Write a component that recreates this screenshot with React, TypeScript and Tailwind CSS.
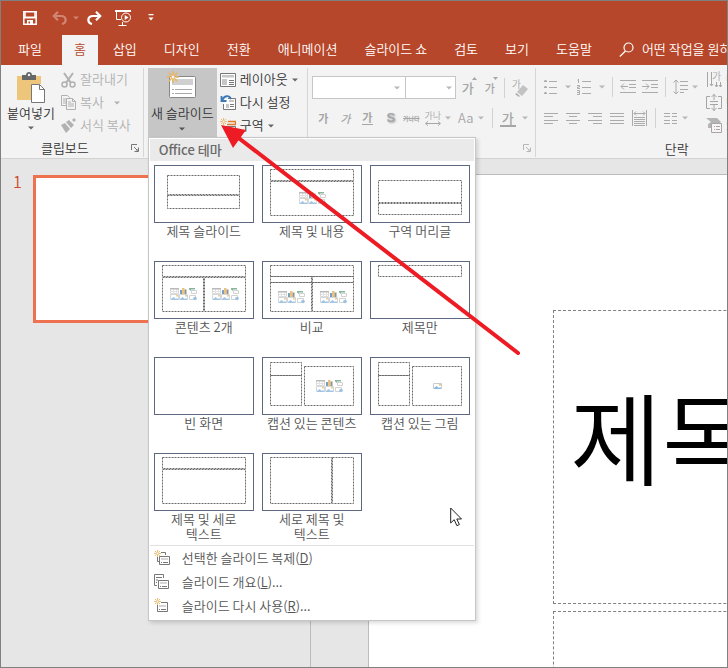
import React from 'react';

type Rect = [number, number, number, number];

interface Layout {
  name: string;
  boxes: Rect[];
  icons?: [number, number][];
  picture?: boolean;
}

const TABS = ['파일', '홈', '삽입', '디자인', '전환', '애니메이션', '슬라이드 쇼', '검토', '보기', '도움말'];

// boxes are x, y, width, height on a 100x58 slide
const LAYOUTS: Layout[] = [
  { name: '제목 슬라이드', boxes: [[13, 10, 72, 19], [13, 30, 72, 13]] },
  { name: '제목 및 내용', boxes: [[8, 4, 83, 11], [8, 16, 83, 34]], icons: [[37, 27]] },
  { name: '구역 머리글', boxes: [[8, 15, 83, 22], [8, 38, 83, 11]] },
  { name: '콘텐츠 2개', boxes: [[8, 4, 83, 11], [8, 16, 41, 34], [50, 16, 41, 34]], icons: [[16, 27], [58, 27]] },
  {
    name: '비교',
    boxes: [[8, 4, 83, 11], [8, 15, 41, 6], [50, 15, 41, 6], [8, 21, 41, 29], [50, 21, 41, 29]],
    icons: [[16, 30], [58, 30]],
  },
  { name: '제목만', boxes: [[8, 4, 83, 11]] },
  { name: '빈 화면', boxes: [] },
  { name: '캡션 있는 콘텐츠', boxes: [[8, 5, 31, 13], [8, 18, 31, 30], [42, 9, 49, 39]], icons: [[54, 23]] },
  { name: '캡션 있는 그림', boxes: [[8, 5, 31, 13], [8, 18, 31, 30], [42, 9, 49, 39]], picture: true },
  { name: '제목 및 세로 텍스트', boxes: [[8, 4, 83, 11], [8, 16, 83, 34]] },
  { name: '세로 제목 및 텍스트', boxes: [[8, 4, 61, 46], [70, 4, 21, 46]] },
];

const Caret = ({ className = 'text-[#666]' }: { className?: string }) => (
  <svg width="6" height="4" viewBox="0 0 6 4" className={`shrink-0 ${className}`} aria-hidden="true">
    <path d="M0 .5h6L3 3.5z" fill="currentColor" />
  </svg>
);

const Divider = () => <span className="h-5 w-px shrink-0 bg-[#d2d2d2]" />;

const Launcher = ({ label, className }: { label: string; className: string }) => (
  <button aria-label={label} className={className}>
    <svg width="8" height="8" viewBox="0 0 8 8" fill="none" stroke="currentColor">
      <path d="M.5 6V.5H6M3 3l3 3M7.500 3.500v4h-4M7 5v2H5" />
    </svg>
  </button>
);

const Burst = () => (
  <g stroke="#eab45e" strokeWidth="1.600" fill="none">
    <path d="M6 0v3.500M6 8.500V12M0 6h3.500M8.500 6H12M1.800 1.800l2.500 2.500M7.700 7.700l2.500 2.500M10.200 1.800L7.700 4.300M4.300 7.700l-2.500 2.500" />
    <circle cx="6" cy="6" r="2" fill="#f2f2f2" strokeWidth="1" />
  </g>
);

const SmallPicture = ({ x, y }: { x: number; y: number }) => (
  <g transform={`translate(${x} ${y})`}>
    <path d="M.5.5h8v5h-8z" fill="#fff" stroke="#c9cdd2" />
    <path d="M1 5l2.500-2L6 5l1-1 1.500 1.500V6H1z" fill="#8db9de" />
    <path d="M6 1h2v1.500H6z" fill="#f0c274" />
  </g>
);

const ContentIcons = ({ x, y }: { x: number; y: number }) => (
  <g transform={`translate(${x} ${y})`} opacity=".8">
    <path d="M.5.5h8v5h-8z" fill="#fff" stroke="#cfcfcf" />
    <path d="M1 3.500h7M3.500 1v5M6.500 1v5" stroke="#dcdcdc" />
    <path d="M0 0h9v1.500H0z" fill="#aaa" />
    <path d="M10 2h2v4h-2z" fill="#5d87b0" />
    <path d="M12 0h2.500v6H12z" fill="#e9b65c" />
    <path d="M14.500 1.500h2V6h-2z" fill="#777" />
    <path d="M19 0h6v1.500h-4V3l-2-1.500z" fill="#6aa585" />
    <path d="M21.500 2.500h5v3h-5z" fill="#fff" stroke="#c8c8c8" />
    <SmallPicture x={0} y={6} />
    <SmallPicture x={9} y={6} />
    <path d="M19.500 7.500h6v4h-6z" fill="#fff" stroke="#c8c8c8" />
    <circle cx="25" cy="10.500" r="1.800" fill="#86b4df" />
  </g>
);

const LayoutPreview = ({ layout }: { layout: Layout }) => (
  <svg viewBox="1 1 98 56" className="block w-full" aria-hidden="true">
    {layout.boxes.map(([x, y, w, h], i) => (
      <rect key={i} x={x + 0.5} y={y + 0.5} width={w} height={h} fill="none" stroke="#6a6a6a" strokeDasharray="2 1" />
    ))}
    {layout.icons?.map(([x, y]) => <ContentIcons key={x} x={x} y={y} />)}
    {layout.picture && <SmallPicture x={63} y={26} />}
  </svg>
);

const NewSlideMenu = () => (
  <div className="absolute left-0 top-full z-10 w-[328px] border border-[#c6c6c6] bg-white p-px pb-0.5 text-[#555] shadow-[2px_2px_4px_rgba(0,0,0,0.15)]">
    <h2 className="bg-[#eaeaea] px-[9px] leading-[22px] font-medium text-[#6a6a6a]">Office 테마</h2>
    <div className="grid grid-cols-3 gap-2 p-1">
      {LAYOUTS.map((layout) => (
        <button key={layout.name} className="flex flex-col items-center">
          <span className="w-full border border-[#5d6880]">
            <LayoutPreview layout={layout} />
          </span>
          <span className="min-h-[30px] px-3 leading-[15px] break-keep">
            {layout.name.length > 9 ? layout.name : <span className="whitespace-nowrap">{layout.name}</span>}
          </span>
        </button>
      ))}
    </div>
    <div className="border-t border-[#e1e1e1]">
      <button className="flex h-6 w-full items-center gap-3 px-1">
        <svg width="16" height="16" viewBox="0 0 16 16" fill="none" stroke="#777">
          <path d="M7 2.500h4.500V5M3.500 7v4.500H5" />
          <path d="M5.500 6.500h10v8h-10z" fill="#fff" />
          <path d="M7 8h7v2H7z" fill="#d5d5d5" stroke="none" />
          <path d="M7 12.500h1M9 12.500h5" />
          <g transform="scale(.58)"><Burst /></g>
        </svg>
        <span>선택한 슬라이드 복제(<u>D</u>)</span>
      </button>
      <button className="flex h-6 w-full items-center gap-3 px-1">
        <svg width="16" height="16" viewBox="0 0 16 16" fill="none" stroke="#777">
          <path d="M3 11.500H.5V.5h9V4M2 3.500h6M2 6h2M2 8.500h1" />
          <path d="M4.500 6.500h10v8h-10z" fill="#fff" />
          <path d="M6 8h7v2H6z" fill="#d5d5d5" stroke="none" />
          <path d="M6 12.500h1M8 12.500h5" />
        </svg>
        <span>슬라이드 개요(<u>L</u>)...</span>
      </button>
      <button className="flex h-6 w-full items-center gap-3 px-1">
        <svg width="16" height="16" viewBox="0 0 16 16" fill="none" stroke="#777">
          <path d="M7 4.500h6.500v9h-10V7" />
          <path d="M5 7h7v2H5z" fill="#d5d5d5" stroke="none" />
          <path d="M5 11.500h1M7 11.500h5" />
          <g transform="scale(.58)"><Burst /></g>
        </svg>
        <span>슬라이드 다시 사용(<u>R</u>)...</span>
      </button>
    </div>
  </div>
);

const TitleBar = () => (
  <header className="bg-[#b7472a] text-white">
    <div className="flex h-[34px] items-center pl-[22px]">
      <button aria-label="저장">
        <svg width="14" height="14" viewBox="0 0 14 14" fill="none" stroke="#fff" strokeWidth="1.500">
          <path d="M.8.8h12.400v12.400H.8z" />
          <path d="M1 6.500h12" strokeWidth="2" />
          <path d="M2 1v5M12 1v5" />
          <path d="M4 9h6v4H7V10.500H5.500V13H4z" fill="#fff" stroke="none" />
        </svg>
      </button>
      <button aria-label="실행 취소" className="ml-[15px] flex items-center gap-1.5 text-[#d08673]">
        <svg width="15" height="14" viewBox="0 0 15 14" fill="none" stroke="currentColor" strokeWidth="2.200">
          <path d="M2 5h7c6 0 6 7 1 8" />
          <path d="M6 .8L1.800 5 6 9.200" />
        </svg>
        <Caret className="text-[#d08673]" />
      </button>
      <button aria-label="다시 실행" className="ml-2">
        <svg width="15" height="14" viewBox="0 0 15 14" fill="none" stroke="#fff" strokeWidth="2.200">
          <path d="M13 5H6C0 5 0 12 5 13" />
          <path d="M9 .8L13.200 5 9 9.200" />
        </svg>
      </button>
      <button aria-label="처음부터 시작" className="ml-[13px]">
        <svg width="17" height="16" viewBox="0 0 17 16" fill="none" stroke="#fff">
          <path d="M0 1h16" strokeWidth="2" />
          <path d="M1.500 2v7.500H6M7.500 12v3M3.500 15.500h8" />
          <circle cx="11" cy="7.500" r="4.500" />
          <path d="M9.700 5v5L13.500 7.500z" fill="#fff" stroke="none" />
        </svg>
      </button>
      <button aria-label="빠른 실행 도구 모음 사용자 지정" className="ml-4">
        <svg width="6" height="8" viewBox="0 0 6 8" fill="#fff">
          <path d="M.5 0h5v1.200h-5zM.5 3.500h5L3 6.500z" />
        </svg>
      </button>
    </div>
    <nav className="flex gap-[3px] whitespace-nowrap pl-[5px] leading-7">
      {TABS.map((tab) => (
        <button key={tab} className={tab === '홈' ? 'ml-[5px] bg-[#f3f3f3] px-3 pb-0.5 text-[#b7472a]' : 'px-3 pb-0.5'}>
          {tab}
        </button>
      ))}
      <button className="flex items-center gap-2 pb-0.5 pl-3">
        <svg width="15" height="15" viewBox="0 0 15 15" fill="none" stroke="#fff" strokeWidth="1.200">
          <circle cx="9.500" cy="5.500" r="4.500" />
          <path d="M6.500 9L.8 14.500" />
        </svg>
        어떤 작업을 원하
      </button>
    </nav>
  </header>
);

const ClipboardGroup = () => (
  <section className="flex shrink-0 flex-col border-r border-[#d6d6d6] pl-1.5">
    <div className="flex h-[69px]">
      <button className="flex w-12 flex-col items-center whitespace-nowrap text-[#333]">
        <svg width="30" height="32" viewBox="0 0 30 32" className="mt-1">
          <path d="M1 4h24v8h-9v16H1z" fill="#edc57b" />
          <path d="M6 3h4c0-4 6-4 6 0h4v5H6z" fill="#666" />
          <circle cx="13" cy="3" r="1.200" fill="#f3f3f3" />
          <path d="M15.500 12.500h8l5 5v13h-13z" fill="#fff" stroke="#777" />
          <path d="M23.500 12.500v5h5" fill="none" stroke="#777" />
        </svg>
        <span className="leading-[18px]">붙여넣기</span>
        <Caret className="mt-1 text-[#666]" />
      </button>
      <div className="ml-1.5 flex flex-col pr-3 text-[#b1b1b1]">
        <button className="flex h-[23px] items-center gap-1">
          <svg width="15" height="16" viewBox="0 0 15 16" fill="none" stroke="currentColor" strokeWidth="1.500">
            <path d="M3 1l7 10M12 1L5 11" strokeWidth="2" />
            <circle cx="3.500" cy="12.500" r="2.500" />
            <circle cx="11.500" cy="12.500" r="2.500" />
          </svg>
          <span className="pb-0.5">잘라내기</span>
        </button>
        <button className="flex h-[23px] items-center gap-1">
          <svg width="15" height="15" viewBox="0 0 15 15" fill="#f3f3f3" stroke="currentColor">
            <path d="M.5.5h6l2 2v8h-8zM2 4h3M2 6h3M2 8h3" />
            <path d="M5.500 3.500h6l3 3v8h-9zM11.500 3.500v3h3M7 7h3M7 9h6M7 11h6" />
          </svg>
          <span className="pb-0.5">복사</span>
          <Caret className="ml-1.5 text-[#b1b1b1]" />
        </button>
        <button className="flex h-[23px] items-center gap-1">
          <svg width="15" height="15" viewBox="0 0 15 15" fill="currentColor">
            <path d="M0 7l4-2 5 6-4 4zM5 4l3-2 5 5-3 3zM11 2l2-2 2 2-2 2z" />
          </svg>
          <span className="pb-0.5">서식 복사</span>
        </button>
      </div>
    </div>
    <div className="flex h-5 items-center pt-0.5 pr-1 text-[#333]">
      <span className="grow pr-2 text-center">클립보드</span>
      <Launcher label="클립보드 옵션" className="text-[#777]" />
    </div>
  </section>
);

const SlidesGroup = () => (
  <section className="flex w-[164px] shrink-0 border-r border-[#d6d6d6] pl-1 text-[#333]">
    <div className="relative h-[69px]">
      <button className="flex h-full w-[69px] flex-col items-center whitespace-nowrap bg-[#c6c6c6]" aria-expanded="true">
        <svg width="30" height="28" viewBox="0 0 30 28" className="mt-[3px]">
          <rect x="2.500" y="5.500" width="26" height="21" rx="1" fill="#fff" stroke="#888" />
          <path d="M5 8h21v6H5z" fill="#d0d0d0" />
          <path d="M5 18.500h2M8 18.500h17M5 22.500h2M8 22.500h17" stroke="#aaa" />
          <Burst />
        </svg>
        <span className="mt-1 leading-[20px]">새 슬라이드</span>
        <Caret className="mt-1 text-[#555]" />
      </button>
      <NewSlideMenu />
    </div>
    <div className="flex flex-col whitespace-nowrap pl-[3px]">
      <button className="flex h-[23px] items-center gap-1">
        <svg width="16" height="14" viewBox="0 0 16 14" fill="#fff" stroke="#777">
          <path d="M.5.5h15v13H.5z" />
          <path d="M2 2h12v2.500H2zM2 6h5v6H2z" fill="#c6c6c6" stroke="none" />
          <path d="M9 7.500h5M9 9.500h5M9 11.500h5" />
        </svg>
        <span className="pb-0.5">레이아웃</span>
        <Caret />
      </button>
      <button className="flex h-[23px] items-center gap-1">
        <svg width="16" height="15" viewBox="0 0 16 15" fill="none" stroke="#777">
          <path d="M8 3.500h7.500v11h-12V9" fill="#fff" />
          <path d="M9 5h5v2H9zM6 9h3v4H6z" fill="#c6c6c6" stroke="none" />
          <path d="M10 9.500h4M10 11.500h4" />
          <path d="M1.500 1v5h5M2 6c2-6 7-6 9-2" stroke="#3b78b5" strokeWidth="1.800" />
        </svg>
        <span className="pb-0.5">다시 설정</span>
      </button>
      <button className="flex h-[23px] items-center gap-1">
        <svg width="16" height="15" viewBox="0 0 16 15" fill="none">
          <path d="M8 3.500h7.500v3H7" stroke="#e07b2c" strokeWidth="1.500" />
          <path d="M6.500 8.500h9v5h-9z" fill="#fff" stroke="#777" />
          <g transform="scale(.6)"><Burst /></g>
        </svg>
        <span className="pb-0.5">구역</span>
        <Caret />
      </button>
    </div>
  </section>
);

const FontGroup = () => (
  <section className="flex w-[228px] shrink-0 flex-col border-r border-[#d6d6d6] pl-1 text-[#a6a6a6]">
    <div className="mt-2 flex h-[23px] items-center">
      <div className="relative h-full">
        <select aria-label="글꼴" disabled className="h-full w-[94px] appearance-none border border-[#c6c6c6] bg-white" />
        <Caret className="absolute top-2.5 right-1.5 text-[#b8b8b8]" />
      </div>
      <div className="relative h-full">
        <select aria-label="글꼴 크기" disabled className="h-full w-[50px] appearance-none border border-l-0 border-[#c6c6c6] bg-white" />
        <Caret className="absolute top-2.5 right-1 text-[#b8b8b8]" />
      </div>
      <button className="relative ml-1.5 w-[15px] text-left font-medium leading-[22px]">
        가
        <svg width="5" height="3" viewBox="0 0 5 3" className="absolute top-0 right-0" fill="currentColor"><path d="M0 3h5L2.500 0z" /></svg>
      </button>
      <button className="relative ml-2 w-[13px] text-left text-[11px] font-medium leading-[22px]">
        가
        <svg width="5" height="3" viewBox="0 0 5 3" className="absolute top-0 right-0" fill="currentColor"><path d="M0 0h5L2.500 3z" /></svg>
      </button>
      <span className="ml-1.5 mr-[7px] flex"><Divider /></span>
      <button className="relative flex h-[18px] w-4 text-[10px] leading-[10px]">
        가
        <svg width="13" height="12" viewBox="0 0 13 12" className="absolute right-0 bottom-0">
          <path d="M8 0l5 4-6 7-5-4z" fill="#c2c2c2" />
          <path d="M1.500 8l4 3.500H3L0 9z" fill="#b0b0b0" />
        </svg>
      </button>
    </div>
    <div className="mt-2 flex h-[22px] items-center text-[11px]">
      <button className="ml-1.5 w-[11px] font-bold">가</button>
      <button className="ml-[11px] w-[11px] font-medium italic">가</button>
      <button className="ml-[11px] w-[11px] border-b border-current font-bold leading-[13px]">가</button>
      <button className="ml-3 w-3 font-['Liberation_Sans',sans-serif] text-[13px] font-bold [text-shadow:1px_1px_2px_#aaa]">S</button>
      <button className="ml-1.5 w-[17px] whitespace-nowrap text-[6px] font-bold line-through">가나다</button>
      <button className="ml-[5px] flex items-center gap-1">
        <span className="flex w-4 flex-col items-center whitespace-nowrap text-[9px] leading-[10px]">
          가나
          <svg width="16" height="5" viewBox="0 0 16 5" fill="none" stroke="currentColor"><path d="M.5 2.500h15M3 .3L.7 2.500 3 4.700M13 .3l2.300 2.200L13 4.700" /></svg>
        </span>
        <Caret className="text-[#b8b8b8]" />
      </button>
      <button className="ml-[7px] flex items-center gap-1 text-[13px]">
        <span className="w-4">Aa</span>
        <Caret className="text-[#b8b8b8]" />
      </button>
      <span className="ml-2 mr-[7px] flex"><Divider /></span>
      <button className="flex items-center gap-1.5 text-[13px]">
        <span className="w-4 border-b-2 border-current font-medium leading-[15px]">가</span>
        <Caret className="text-[#b8b8b8]" />
      </button>
    </div>
    <div className="mt-auto flex h-5 items-center justify-end pt-0.5 pr-1">
      <Launcher label="글꼴 옵션" className="text-[#b8b8b8]" />
    </div>
  </section>
);

const LineIcon = ({ d, w = 14 }: { d: string; w?: number }) => (
  <svg width={w} height="16" viewBox={`0 0 ${w} 16`} fill="none" stroke="#ababab" className="shrink-0">
    <path d={d} />
  </svg>
);

const ParagraphGroup = () => (
  <section className="flex w-[274px] shrink-0 flex-col pl-2 text-[#b1b1b1]">
    <div className="flex h-[69px]">
      <div className="w-[162px] shrink-0">
        <div className="mt-2 flex h-[22px] items-center">
          <button aria-label="글머리 기호" className="flex items-center gap-2">
            <LineIcon d="M0 2.500h3M0 8.500h3M0 14.500h3M.5 1.500h2M.5 7.500h2M.5 13.500h2M5 2.500h8M5 8.500h8M5 14.500h8" w={13} />
            <Caret className="text-[#b8b8b8]" />
          </button>
          <button aria-label="번호 매기기" className="ml-1.5 flex items-center gap-[7px]">
            <LineIcon d="M1.500 0v4M.5 1h1M0 6.500h2.500v1.500H.5v1.500H3M0 11.500h2.500v4H0M0 13.500h2M5 2.500h9M5 8.500h9M5 14.500h9" w={15} />
            <Caret className="text-[#b8b8b8]" />
          </button>
          <span className="ml-[7px] mr-[7px] flex"><Divider /></span>
          <button aria-label="목록 수준 줄임">
            <LineIcon d="M0 1.500h16M9 5.500h7M9 8.500h7M0 13.500h16M1 7.500h7M4 4.500l-3 3 3 3" w={16} />
          </button>
          <button aria-label="목록 수준 늘림" className="ml-1.5">
            <LineIcon d="M0 1.500h16M9 5.500h7M9 8.500h7M0 13.500h16M0 7.500h7M4 4.500l3 3-3 3" w={16} />
          </button>
          <span className="ml-[7px] mr-[7px] flex"><Divider /></span>
          <button aria-label="줄 간격" className="flex items-center gap-1">
            <LineIcon d="M7 2.500h8M7 6.500h8M7 10.500h8M7 13.500h4M3 1v14M.5 3.500L3 1l2.500 2.500M.5 12.500L3 15l2.500-2.500" w={15} />
            <Caret className="text-[#b8b8b8]" />
          </button>
        </div>
        <div className="mt-2 flex h-[24px] items-center gap-2">
          <button aria-label="왼쪽 맞춤"><LineIcon d="M0 3.500h14M0 6.500h9M0 10.500h14M0 13.500h9" /></button>
          <button aria-label="가운데 맞춤"><LineIcon d="M0 3.500h14M3 6.500h8M0 10.500h14M3 13.500h8" /></button>
          <button aria-label="오른쪽 맞춤"><LineIcon d="M0 3.500h14M5 6.500h9M0 10.500h14M5 13.500h9" /></button>
          <button aria-label="양쪽 맞춤"><LineIcon d="M0 3.500h14M0 6.500h14M0 10.500h14M0 13.500h14" /></button>
          <button aria-label="균등 분할"><LineIcon d="M.5 0v16M14.500 0v16M2 3.500h11M4 1.500L2 3.500l2 2M11 1.500l2 2-2 2M2 7.500h11M2 9.500h11M2 11.500h11M2 13.500h11M2 15.500h11" w={15} /></button>
          <Divider />
          <button aria-label="단" className="flex items-center gap-1">
            <LineIcon d="M0 3.500h6M0 6.500h6M0 10.500h6M0 13.500h6M8 3.500h5M8 6.500h5M8 10.500h5M8 13.500h5" />
            <Caret className="text-[#b8b8b8]" />
          </button>
        </div>
      </div>
      <div className="flex flex-col whitespace-nowrap">
        <button className="flex h-[23px] items-center gap-1">
          <svg width="16" height="17" viewBox="0 0 16 17" fill="none" stroke="#a6a6a6">
            <path d="M1.500 1v15M5.500 1v13M10.500 11v5M14.500 11v5M4 13l1.500 2L7 13M9 14l1.500 2 1.500-2M13 14l1.500 2 1.500-2" />
            <text x="6" y="9" fontSize="10" fill="#a6a6a6" stroke="none">가</text>
          </svg>
          텍스트 방향
        </button>
        <button className="flex h-[23px] items-center gap-1">
          <svg width="16" height="17" viewBox="0 0 16 17" fill="none" stroke="#a6a6a6">
            <path d="M4 2.500H.5v12H4M12 2.500h3.500v12H12M4 7.500h8M4 10.500h8M8 0v6M5.500 3L8 .5 10.500 3M8 11v6M5.500 14L8 16.500l2.500-2.500" />
          </svg>
          텍스트 맞춤
        </button>
        <button className="flex h-[23px] items-center gap-1">
          <svg width="16" height="17" viewBox="0 0 16 17" fill="#b5b5b5">
            <path d="M0 1h11l4 4-3 3H5v3H2V7l3-2z" />
            <path d="M5.500 6.500h10v9h-10zM8 9.500h1M8 12.500h1M10 9.500h4M10 12.500h4" fill="#f7f3f7" stroke="#a6a6a6" />
          </svg>
          SmartArt로 변환
        </button>
      </div>
    </div>
    <span className="h-5 pt-0.5 text-center leading-5 text-[#333]">단락</span>
  </section>
);

const App: React.FC = () => {
  return (
    <div className="relative flex h-screen flex-col overflow-hidden border border-[#808080] bg-[#e6e6e6] font-['Noto_Sans_CJK_KR',sans-serif] text-[13px] font-[350]">
      <TitleBar />

      <div className="flex border-b border-[#d2d2d2] bg-[#f3f3f3] pt-[3px] pb-px">
        <ClipboardGroup />
        <SlidesGroup />
        <FontGroup />
        <ParagraphGroup />
      </div>

      <div className="flex min-h-0 grow">
        <aside className="flex w-[310px] shrink-0 items-start border-r border-[#bcbcbc] pt-4 pl-3">
          <span className="w-5 text-base leading-3 text-[#d0492a]">1</span>
          <div className="h-[148px] w-[258px] border-[3px] border-[#ee7150] bg-white" />
        </aside>
        <main className="min-w-0 grow overflow-hidden pt-[15px] pl-[57px]">
          <div className="h-full border-t border-l border-[#bcbcbc] bg-white pt-[135px] pl-[184px]">
            <div className="flex h-[294px] w-[960px] items-center border border-dashed border-[#808080] pb-11 pl-4">
              <h1 className="text-[100px] leading-none font-[350] text-black">제목</h1>
            </div>
            <div className="mt-[7px] h-[180px] w-[960px] border border-dashed border-[#808080]" />
          </div>
        </main>
      </div>

      {/* red pointer to the new slide button */}
      <svg width="310" height="240" viewBox="0 0 310 240" className="pointer-events-none absolute top-[120px] left-[215px] z-20">
        <path d="M20 15L302 232" stroke="#ed1c24" strokeWidth="4" strokeLinecap="round" />
        <path d="M5 4l25 5-13 18z" fill="#ed1c24" />
      </svg>
      <svg width="13" height="20" viewBox="0 0 13 20" className="pointer-events-none absolute top-[506px] left-[449px] z-20">
        <path d="M.7 1v15l3.500-3.300 2.700 6 2.500-1.200-2.600-5.500h4.700z" fill="#fff" stroke="#222" />
      </svg>
    </div>
  );
};

export default App;
